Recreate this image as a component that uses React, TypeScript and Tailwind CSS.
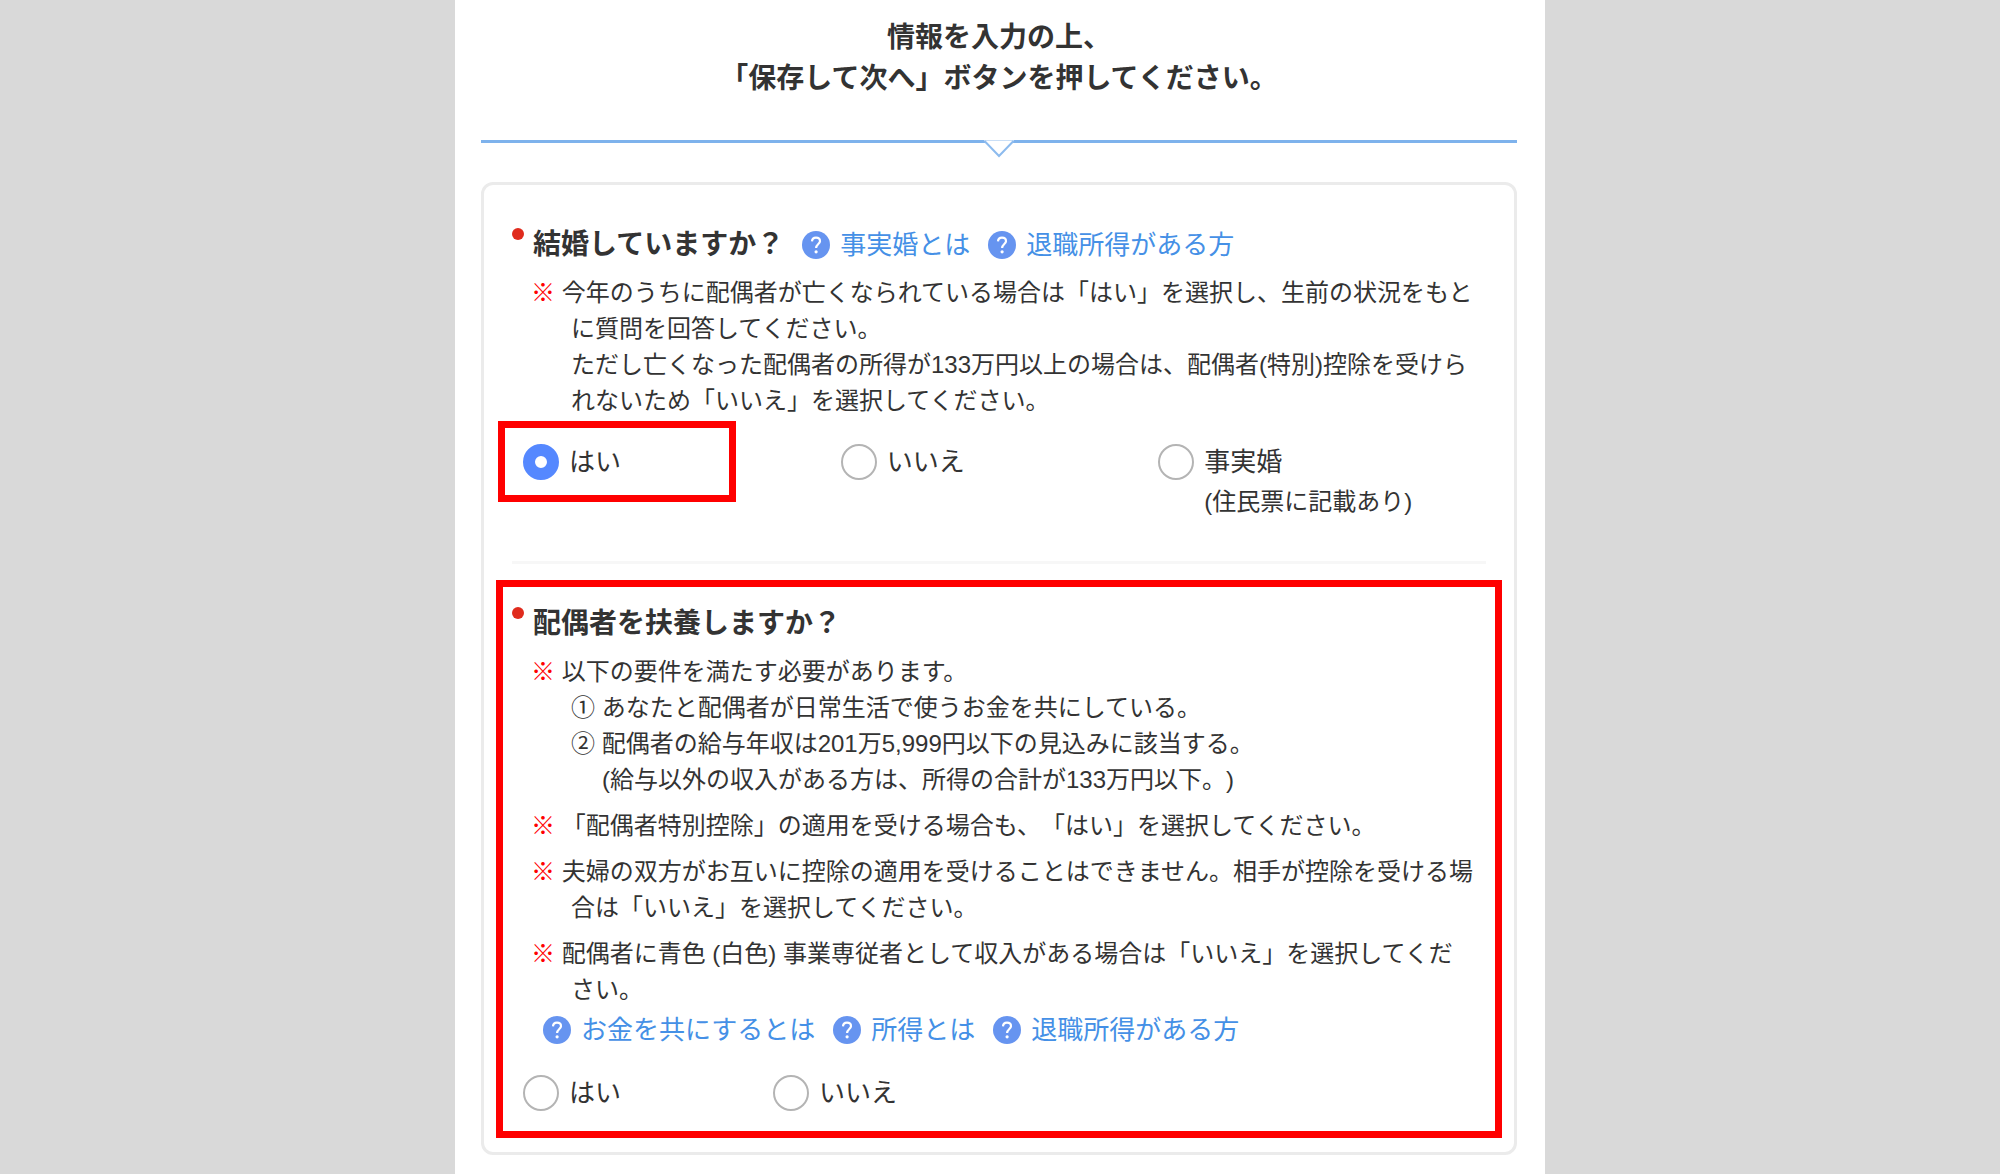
import { useState } from "react"
import type { ReactNode } from "react"

const HelpIcon = () => (
  <svg viewBox="0 0 28 28" className="h-7 w-7 shrink-0" aria-hidden="true">
    <circle cx="14" cy="14" r="14" fill="#6694f0" />
    <path
      d="M10 10.4C10.1 8.1 11.7 6.7 14 6.7C16.4 6.7 18 8.1 18 10.2C18 12.9 14.1 13.2 14.1 17"
      fill="none"
      stroke="#fff"
      strokeWidth="2.2"
    />
    <circle cx="14.1" cy="20.8" r="1.6" fill="#fff" />
  </svg>
)

const HelpLink = ({ children }: { children: ReactNode }) => (
  <a href="#" className="flex items-center gap-[10px] text-[26px] leading-9 text-[#4590e6]">
    <HelpIcon />
    {children}
  </a>
)

const QuestionTitle = ({ id, children }: { id: string; children: ReactNode }) => (
  <div className="flex items-start gap-[9px]">
    <span className="mt-1 h-3 w-3 shrink-0 rounded-full bg-[#e02b1d]" />
    <h2 id={id} className="text-[28px] font-bold leading-[42px]">
      {children}
    </h2>
  </div>
)

const Note = ({ children }: { children: ReactNode }) => (
  <li className="pl-10 -indent-10">
    <span className="font-bold text-[#ff0000]">※</span> {children}
  </li>
)

// Red frame that points the reader at the part of the form to fill in
const Highlight = ({ className }: { className: string }) => (
  <div className={`pointer-events-none absolute border-[7px] border-[#ff0000] ${className}`} />
)

type RadioProps = {
  name: string
  value: string
  label: string
  sub?: string
  selected: string
  onSelect: (value: string) => void
}

const Radio = ({ name, value, label, sub, selected, onSelect }: RadioProps) => (
  <label className="flex items-start gap-[10px] text-[26px] leading-10">
    <input
      type="radio"
      name={name}
      value={value}
      checked={selected === value}
      onChange={() => onSelect(value)}
      className="mt-[2px] h-9 w-9 shrink-0 appearance-none rounded-full border-2 border-[#b4b4b4] bg-white checked:border-[12px] checked:border-[#5588ff]"
    />
    <span>
      {label}
      {sub && <span className="block text-[24px]">{sub}</span>}
    </span>
  </label>
)

const App = () => {
  const [married, setMarried] = useState("yes")
  const [support, setSupport] = useState("")

  return (
    <div
      lang="ja"
      className="min-h-screen bg-[#d9d9d9] font-['Liberation_Sans','Noto_Sans_CJK_JP',sans-serif] text-[#333333] [text-spacing-trim:space-all]"
    >
      <main className="mx-auto min-h-screen w-full max-w-[1090px] bg-white pb-[19px] pl-[26px] pr-7 pt-[17px]">
        <h1 className="text-center text-[28px] font-bold leading-[41px]">
          情報を入力の上、
          <br />
          「保存して次へ」ボタンを押してください。
        </h1>

        <div className="relative mt-[41px] h-[3px] bg-[#7eb2ec]">
          <svg
            viewBox="0 0 32 18"
            className="absolute left-1/2 top-0 h-[18px] w-8 -translate-x-1/2"
            aria-hidden="true"
          >
            <path d="M1 0L16 16L31 0Z" fill="#fff" />
            <path d="M2 0.5H30" stroke="#c9def6" />
            <path d="M1.5 1L16 16L30.5 1" fill="none" stroke="#8dbbee" strokeWidth="2" />
          </svg>
        </div>

        <form className="mt-[39px] rounded-xl border-[3px] border-[#ebebeb] px-7">
          <section className="border-b-[3px] border-[#f7f7f7] py-[39px]">
            <div className="flex flex-wrap items-center gap-x-[18px]">
              <QuestionTitle id="married">結婚していますか？</QuestionTitle>
              <HelpLink>事実婚とは</HelpLink>
              <HelpLink>退職所得がある方</HelpLink>
            </div>
            <ul className="mt-[9px] pl-[19px] pr-[10px] text-[24px] leading-9">
              <Note>
                今年のうちに配偶者が亡くなられている場合は「はい」を選択し、生前の状況をもとに質問を回答してください。
                <span className="block indent-0">
                  ただし亡くなった配偶者の所得が133万円以上の場合は、配偶者(特別)控除を受けられないため「いいえ」を選択してください。
                </span>
              </Note>
            </ul>
            <div
              role="radiogroup"
              aria-labelledby="married"
              className="mt-[23px] grid grid-cols-3 pl-[11px] pr-[10px]"
            >
              <div className="relative">
                <Radio name="married" value="yes" label="はい" selected={married} onSelect={setMarried} />
                <Highlight className="-left-[25px] -top-[21px] h-[81px] w-[238px]" />
              </div>
              <Radio name="married" value="no" label="いいえ" selected={married} onSelect={setMarried} />
              <Radio
                name="married"
                value="common"
                label="事実婚"
                sub="(住民票に記載あり)"
                selected={married}
                onSelect={setMarried}
              />
            </div>
          </section>

          <section className="relative py-[39px]">
            <QuestionTitle id="support">配偶者を扶養しますか？</QuestionTitle>
            <ul className="mt-[9px] flex flex-col gap-[10px] pl-[19px] pr-[10px] text-[24px] leading-9">
              <Note>
                以下の要件を満たす必要があります。
                <span className="block pl-[31px] -indent-[31px]">
                  ① あなたと配偶者が日常生活で使うお金を共にしている。
                </span>
                <span className="block pl-[31px] -indent-[31px]">
                  ② 配偶者の給与年収は201万5,999円以下の見込みに該当する。
                  <br />
                  <span className="block indent-0">(給与以外の収入がある方は、所得の合計が133万円以下。)</span>
                </span>
              </Note>
              <Note>「配偶者特別控除」の適用を受ける場合も、「はい」を選択してください。</Note>
              <Note>
                夫婦の双方がお互いに控除の適用を受けることはできません。相手が控除を受ける場合は「いいえ」を選択してください。
              </Note>
              <Note>
                配偶者に青色 (白色) 事業専従者として収入がある場合は「いいえ」を選択してください。
              </Note>
            </ul>
            <div className="mt-1 flex flex-wrap gap-x-[18px] pl-[31px]">
              <HelpLink>お金を共にするとは</HelpLink>
              <HelpLink>所得とは</HelpLink>
              <HelpLink>退職所得がある方</HelpLink>
            </div>
            <div role="radiogroup" aria-labelledby="support" className="mt-[25px] flex pl-[11px]">
              <div className="w-[250px]">
                <Radio name="support" value="yes" label="はい" selected={support} onSelect={setSupport} />
              </div>
              <Radio name="support" value="no" label="いいえ" selected={support} onSelect={setSupport} />
            </div>
            <Highlight className="-inset-x-4 bottom-[14px] top-4" />
          </section>
        </form>
      </main>
    </div>
  )
}

export default App
